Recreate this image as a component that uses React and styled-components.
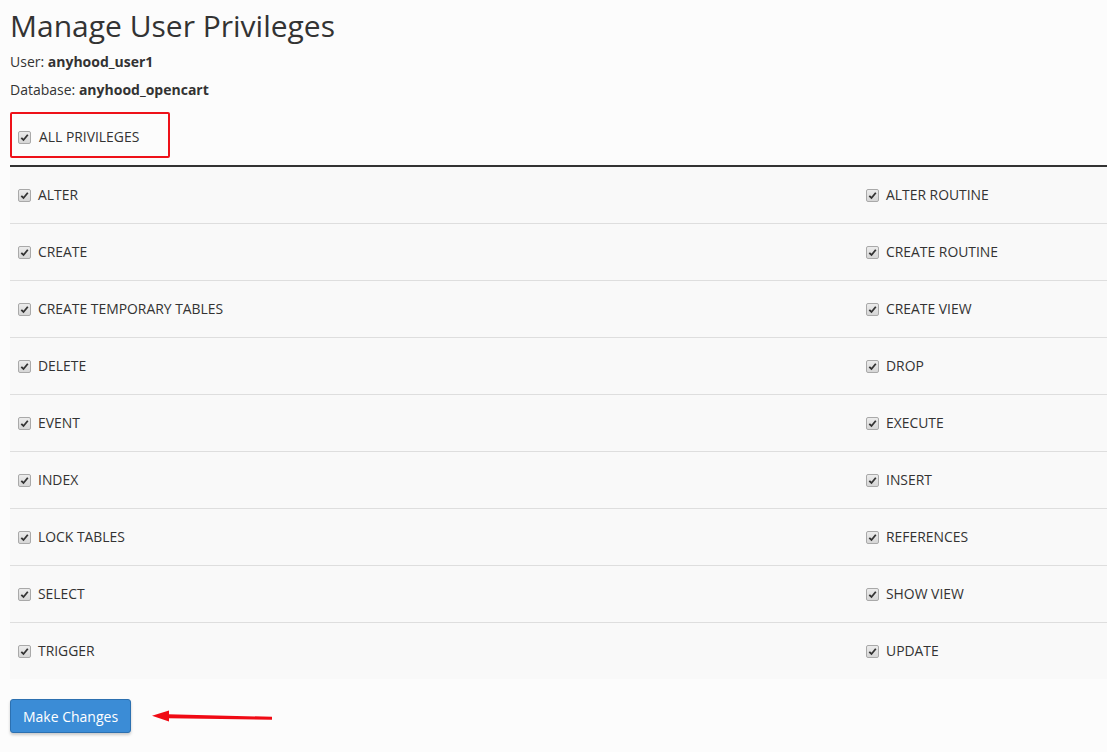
import React from 'react'
import styled, { createGlobalStyle } from 'styled-components'

const GlobalStyle = createGlobalStyle`
    html, body {
        margin: 0;
        padding: 0;
        background: #fcfcfc;
        font-family: "Open Sans", "Liberation Sans", sans-serif;
        color: #333;
        font-size: 14px;
    }
`;

const Page = styled.div`
    padding: 6px 0 20px 10px;
    overflow: hidden;
`;

const Title = styled.h1`
    margin: 0 0 6px;
    font-size: 30px;
    font-weight: 400;
    line-height: 40px;
    color: #333;
`;

const Meta = styled.p`
    margin: 0 0 8px;
    line-height: 20px;
    b {
        font-weight: 700;
    }
`;

const Highlight = styled.div`
    display: flex;
    align-items: center;
    gap: 8px;
    margin-top: 12px;
    width: 160px;
    height: 46px;
    box-sizing: border-box;
    padding: 4px 0 0 6px;
    border: 2px solid #ee1119;
    border-radius: 2px;
`;

const Box = styled.span`
    display: inline-flex;
    align-items: center;
    justify-content: center;
    width: 11px;
    height: 11px;
    border: 1px solid #a9a9a9;
    border-radius: 2px;
    background: linear-gradient(#ececec, #d6d6d6);
    flex-shrink: 0;
`;

const Table = styled.div`
    margin-top: 7px;
    border-top: 2px solid #333;
    display: grid;
    grid-template-columns: 848px 1fr;
    background: #f9f9f9;
`;

const Cell = styled.div`
    display: flex;
    align-items: center;
    gap: 7px;
    height: 56px;
    padding-left: ${p => p.$indent}px;
    border-top: ${p => (p.$first ? 'none' : '1px solid #dedede')};
`;

const Label = styled.span`
    line-height: 20px;
    font-size: 13.9px;
`;

const Footer = styled.div`
    display: flex;
    align-items: center;
    gap: 20px;
    margin-top: 20px;
`;

const Button = styled.button`
    font-family: inherit;
    font-size: 14px;
    color: #fff;
    background: #3b8cd6;
    border: 1px solid #2c70b0;
    border-radius: 3px;
    height: 34px;
    width: 121px;
    padding: 0;
    box-shadow: 0 2px 3px rgba(0, 0, 0, 0.2);
    cursor: pointer;
`;

function Check() {
    return (
        <Box>
            <svg width="9" height="9" viewBox="0 0 9 9">
                <path d="M1.3 4.8 L3.5 7 L7.8 1.8" fill="none" stroke="#333" strokeWidth="1.8" />
            </svg>
        </Box>
    )
}

function Arrow() {
    return (
        <svg width="124" height="14" viewBox="0 0 124 14">
            <path d="M17 5.2 L121 7.8 L121 10.8 L17 9.2 Z" fill="#f00a14" />
            <path d="M1 6.8 L18 1.5 L18 12.5 Z" fill="#f00a14" />
        </svg>
    )
}

const rows = [
    ['ALTER', 'ALTER ROUTINE'],
    ['CREATE', 'CREATE ROUTINE'],
    ['CREATE TEMPORARY TABLES', 'CREATE VIEW'],
    ['DELETE', 'DROP'],
    ['EVENT', 'EXECUTE'],
    ['INDEX', 'INSERT'],
    ['LOCK TABLES', 'REFERENCES'],
    ['SELECT', 'SHOW VIEW'],
    ['TRIGGER', 'UPDATE'],
];

export default function App() {
    return (
        <Page>
            <GlobalStyle />
            <Title>Manage User Privileges</Title>
            <Meta>User: <b>anyhood_user1</b></Meta>
            <Meta>Database: <b>anyhood_opencart</b></Meta>
            <Highlight>
                <Check />
                <Label>ALL PRIVILEGES</Label>
            </Highlight>
            <Table>
                {rows.map(([left, right], i) => (
                    <React.Fragment key={left}>
                        <Cell $indent={8} $first={i === 0}>
                            <Check />
                            <Label>{left}</Label>
                        </Cell>
                        <Cell $indent={8} $first={i === 0}>
                            <Check />
                            <Label>{right}</Label>
                        </Cell>
                    </React.Fragment>
                ))}
            </Table>
            <Footer>
                <Button>Make Changes</Button>
                <Arrow />
            </Footer>
        </Page>
    )
}
